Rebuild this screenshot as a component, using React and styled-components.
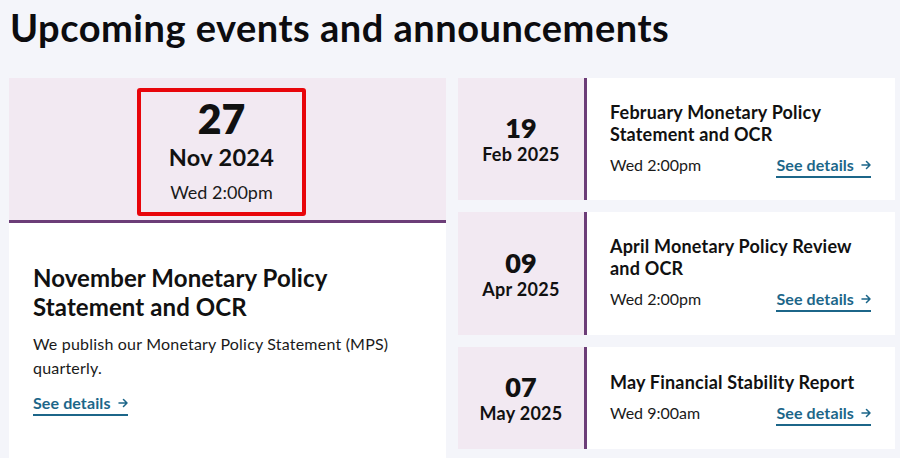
import React from "react";
import styled, { createGlobalStyle } from "styled-components";

const GlobalStyle = createGlobalStyle`
  html, body {
    margin: 0;
    padding: 0;
    background: #f4f5fa;
    font-family: "Lato", "Open Sans", Arial, sans-serif;
    color: #111;
  }
`;

const Page = styled.div`
  padding: 0 5px 0 9px;
  height: 458px;
  overflow: hidden;
`;

const Heading = styled.h1`
  margin: 0;
  padding: 5px 0 0 1px;
  font-size: 38px;
  line-height: 44px;
  font-weight: 700;
  letter-spacing: 0.5px;
  color: #0c0c0f;
`;

const Grid = styled.div`
  display: grid;
  grid-template-columns: 437px 437px;
  gap: 12px;
  margin-top: 29px;
`;

const FeatureCard = styled.div`
  background: #fff;
  height: 400px;
`;

const FeatureTop = styled.div`
  background: #f2e9f2;
  border-bottom: 3px solid #6c3d78;
  display: flex;
  justify-content: center;
  padding-top: 10px;
  box-sizing: border-box;
  height: 145px;
`;

const Highlight = styled.div`
  width: 169px;
  height: 128px;
  box-sizing: border-box;
  border: 4px solid #e8050b;
  border-radius: 3px;
  margin-right: 12px;
  display: flex;
  flex-direction: column;
  align-items: center;
  padding-top: 4px;
`;

const BigDay = styled.div`
  font-size: 41px;
  line-height: 46px;
  font-weight: 800;
`;

const BigMonth = styled.div`
  font-size: 23.5px;
  line-height: 28px;
  font-weight: 700;
  letter-spacing: 0.3px;
  margin-top: 1px;
`;

const BigTime = styled.div`
  font-size: 18px;
  line-height: 22px;
  margin-top: 10px;
  color: #1a1a1a;
`;

const FeatureBody = styled.div`
  padding: 40px 24px 0 24px;
`;

const FeatureTitle = styled.h2`
  margin: 0;
  font-size: 24px;
  line-height: 29px;
  font-weight: 700;
  letter-spacing: 0.1px;
`;

const FeatureText = styled.p`
  margin: 11px 0 0;
  font-size: 16px;
  line-height: 24px;
  letter-spacing: 0.2px;
  color: #1a1a1a;
`;

const Link = styled.a`
  display: inline-flex;
  align-items: center;
  gap: 7px;
  font-size: 16px;
  line-height: 20px;
  font-weight: 700;
  letter-spacing: 0.1px;
  color: #1c6689;
  text-decoration: none;
  border-bottom: 2px solid #1c6689;
  padding-bottom: 1px;
  white-space: nowrap;
  cursor: pointer;
`;

const FeatureLink = styled.div`
  margin-top: 13px;
`;

const List = styled.div`
  display: flex;
  flex-direction: column;
  gap: 12px;
`;

const EventCard = styled.div`
  display: flex;
  background: #fff;
  height: ${(p) => p.h}px;
`;

const DateCol = styled.div`
  width: 126px;
  flex-shrink: 0;
  background: #f2e9f2;
  border-right: 3px solid #6c3d78;
  display: flex;
  flex-direction: column;
  align-items: center;
  justify-content: center;
`;

const Day = styled.div`
  font-size: 27px;
  line-height: 30px;
  font-weight: 800;
`;

const Month = styled.div`
  font-size: 18px;
  line-height: 22px;
  font-weight: 700;
  letter-spacing: 0.3px;
`;

const Content = styled.div`
  flex: 1;
  padding: 0 24px 0 23px;
  display: flex;
  flex-direction: column;
  justify-content: center;
`;

const Title = styled.div`
  font-size: 18px;
  line-height: 22px;
  font-weight: 700;
  letter-spacing: 0.2px;
`;

const Meta = styled.div`
  display: flex;
  justify-content: space-between;
  align-items: flex-start;
  margin-top: 10px;
`;

const Time = styled.div`
  font-size: 16px;
  line-height: 20px;
  color: #1a1a1a;
`;

const Arrow = () => (
  <svg width="10" height="10" viewBox="0 0 10 10" fill="none" stroke="currentColor" strokeWidth="1.5" strokeLinecap="round" strokeLinejoin="round">
    <path d="M1 5h8M5.5 1.5 9 5 5.5 8.5" />
  </svg>
);

const events = [
  { day: "19", month: "Feb 2025", title: ["February Monetary Policy", "Statement and OCR"], time: "Wed 2:00pm", h: 122 },
  { day: "09", month: "Apr 2025", title: ["April Monetary Policy Review", "and OCR"], time: "Wed 2:00pm", h: 123 },
  { day: "07", month: "May 2025", title: ["May Financial Stability Report"], time: "Wed 9:00am", h: 102 },
];

export default function App() {
  return (
    <Page>
      <GlobalStyle />
      <Heading>Upcoming events and announcements</Heading>
      <Grid>
        <FeatureCard>
          <FeatureTop>
            <Highlight>
              <BigDay>27</BigDay>
              <BigMonth>Nov 2024</BigMonth>
              <BigTime>Wed 2:00pm</BigTime>
            </Highlight>
          </FeatureTop>
          <FeatureBody>
            <FeatureTitle>
              November Monetary Policy
              <br />
              Statement and OCR
            </FeatureTitle>
            <FeatureText>
              We publish our Monetary Policy Statement (MPS)
              <br />
              quarterly.
            </FeatureText>
            <FeatureLink>
              <Link>
                See details <Arrow />
              </Link>
            </FeatureLink>
          </FeatureBody>
        </FeatureCard>
        <List>
          {events.map((e) => (
            <EventCard key={e.day} h={e.h}>
              <DateCol>
                <Day>{e.day}</Day>
                <Month>{e.month}</Month>
              </DateCol>
              <Content>
                <Title>
                  {e.title.map((t, i) => (
                    <div key={i}>{t}</div>
                  ))}
                </Title>
                <Meta>
                  <Time>{e.time}</Time>
                  <Link>
                    See details <Arrow />
                  </Link>
                </Meta>
              </Content>
            </EventCard>
          ))}
        </List>
      </Grid>
    </Page>
  );
}
